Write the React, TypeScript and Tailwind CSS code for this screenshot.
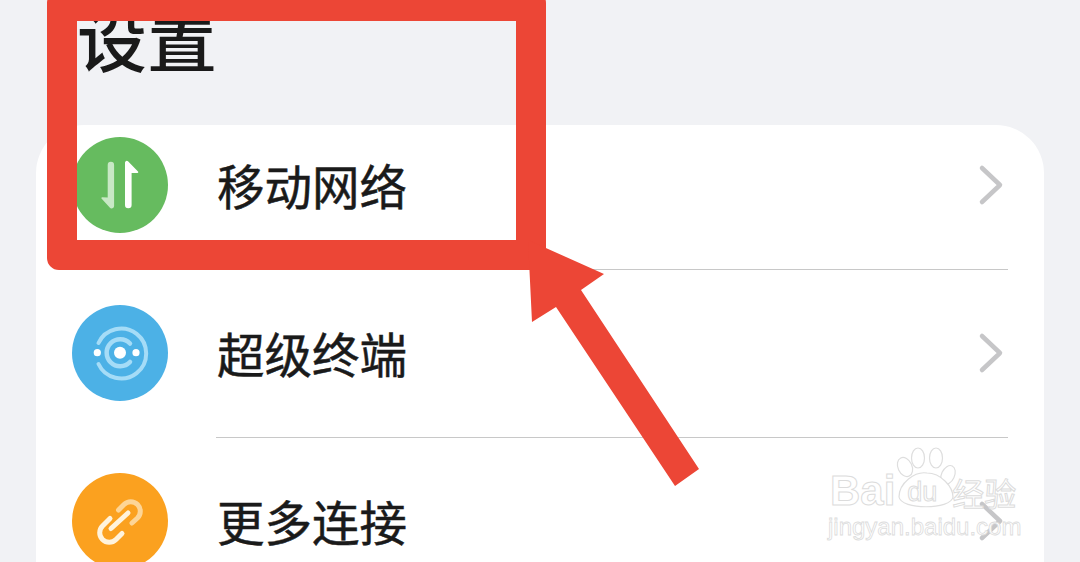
const CJK = "font-['Noto_Sans_CJK_SC','Liberation_Sans',sans-serif]";

function Chevron() {
  return (
    <svg width="26" height="42" viewBox="0 0 26 42" fill="none" className="mr-[40px] shrink-0">
      <path d="M4 4 L22 21 L4 38" stroke="#c6c6c8" strokeWidth="4.5" strokeLinecap="round" strokeLinejoin="round" />
    </svg>
  );
}

function NetworkIcon() {
  return (
    <svg width="96" height="96" viewBox="0 0 96 96" fill="none">
      <path d="M35.7 28 a3.2 3.2 0 0 1 6.4 0 V69 a2.5 2.5 0 0 1 -4.4 1.6 L29.5 61.5 a0.8 0.8 0 0 1 0.6 -1.3 L35.7 60.5 Z" fill="#c8e8c5" />
      <path d="M53 68 a3.3 3.3 0 0 0 6.6 0 V36 L65.5 36 a0.9 0.9 0 0 0 0.5 -1.6 L56 24.2 a1.8 1.8 0 0 0 -3 1.3 Z" fill="#ffffff" />
    </svg>
  );
}

function TerminalIcon() {
  return (
    <svg width="96" height="96" viewBox="0 0 96 96" fill="none">
      <path d="M26.5 38 A25 25 0 1 1 26.5 59" stroke="#a5dcf7" strokeWidth="4" strokeLinecap="round" />
      <path d="M58 38.5 A13.5 13.5 0 1 0 58 57" stroke="#a5dcf7" strokeWidth="4.5" strokeLinecap="round" />
      <circle cx="48" cy="47.7" r="6" fill="#fff" />
      <circle cx="25.3" cy="47.7" r="3.6" fill="#fff" />
      <circle cx="64" cy="47.7" r="3.6" fill="#fff" />
    </svg>
  );
}

function LinkIcon() {
  return (
    <svg width="96" height="96" viewBox="0 0 96 96" fill="none">
      <path d="M46.5 37 L52 31.5 a9.5 9.5 0 0 1 13.5 13.5 L60 50" stroke="#fdd596" strokeWidth="5" strokeLinecap="round" strokeLinejoin="round" />
      <path d="M38 45.5 L30.5 53 a9.5 9.5 0 0 0 13.5 13.5 L50 60.5" stroke="#fff3dc" strokeWidth="5" strokeLinecap="round" strokeLinejoin="round" />
      <path d="M39 55.5 L56 40" stroke="#fff3dc" strokeWidth="5" strokeLinecap="round" />
    </svg>
  );
}

function Row({ color, label, icon, first }: { color: string; label: string; icon: React.ReactNode; first?: boolean }) {
  return (
    <div className={first ? "flex items-center h-[144px] pb-[24px]" : "flex items-center h-[167px] pb-px"}>
      <div className={`ml-[36px] w-[96px] h-[96px] rounded-full shrink-0 ${color}`}>{icon}</div>
      <div className="ml-[49px] flex-1 text-[47.5px] leading-none text-[#1a1a1a] [-webkit-text-stroke:0.5px_#1a1a1a]">{label}</div>
      <Chevron />
    </div>
  );
}

function Watermark() {
  const outline = "text-white [-webkit-text-stroke:1px_#dcdcdc]";
  return (
    <div className="absolute left-[828px] top-[445px] flex w-[200px] flex-col">
      <div className="flex h-[66px] items-end">
        <span className={`ml-[2px] mb-[-1px] text-[42px] leading-none font-bold font-['Liberation_Sans',sans-serif] ${outline}`}>Bai</span>
        <div className="relative ml-[-4px] h-[66px] w-[62px] shrink-0">
          <svg width="66" height="66" viewBox="0 0 66 66" fill="#fff" stroke="#dedede" strokeWidth="1.2">
            <ellipse cx="14" cy="22" rx="7" ry="10" transform="rotate(-25 14 22)" />
            <ellipse cx="27" cy="13" rx="6.5" ry="10" />
            <ellipse cx="45" cy="13" rx="6.5" ry="10" />
            <ellipse cx="57" cy="30" rx="6.5" ry="10" transform="rotate(25 57 30)" />
            <path d="M8 52 C8 38 24 26 36 28 C 50 28 62 42 62 52 C 60 65 10 65 8 52 Z" />
          </svg>
          <span className={`absolute inset-x-0 bottom-[5px] text-center text-[27px] leading-none font-['Liberation_Sans',sans-serif] ${outline}`}>du</span>
        </div>
        <span className={`ml-[-1px] mb-[3px] text-[32px] leading-none ${CJK} ${outline}`}>经验</span>
      </div>
      <span className="mt-[4px] text-[24px] leading-none font-['Liberation_Sans',sans-serif] text-white [-webkit-text-stroke:0.8px_#dcdcdc]">jingyan.baidu.com</span>
    </div>
  );
}

export default function App() {
  return (
    <div className={`relative h-[562px] w-[1080px] overflow-hidden bg-[#f1f2f5] ${CJK}`}>
      <div className="h-[125px] pl-[77px] text-[70px] leading-[74px] font-medium text-[#1a1a1a]">设置</div>

      <div className="mx-[36px] h-[437px] rounded-t-[48px] bg-white">
        <Row first color="bg-[#66bb5f]" label="移动网络" icon={<NetworkIcon />} />
        <div className="ml-[180px] mr-[36px] h-px bg-[#c8c8c8]" />
        <Row color="bg-[#4cb1e6]" label="超级终端" icon={<TerminalIcon />} />
        <div className="ml-[180px] mr-[36px] h-px bg-[#c8c8c8]" />
        <Row color="bg-[#fba11f]" label="更多连接" icon={<LinkIcon />} />
      </div>

      <Watermark />

      {/* red annotation drawn over the screenshot */}
      <div className="absolute left-[47px] top-[-9px] h-[279px] w-[499px] rounded-[12px] border-[30px] border-[#ec4636]" />
      <svg width="1080" height="562" className="absolute left-0 top-0">
        <polygon points="528,240 604,274 581,290 699,469 675,486 556,307 532,322" fill="#ec4636" />
      </svg>
    </div>
  );
}
